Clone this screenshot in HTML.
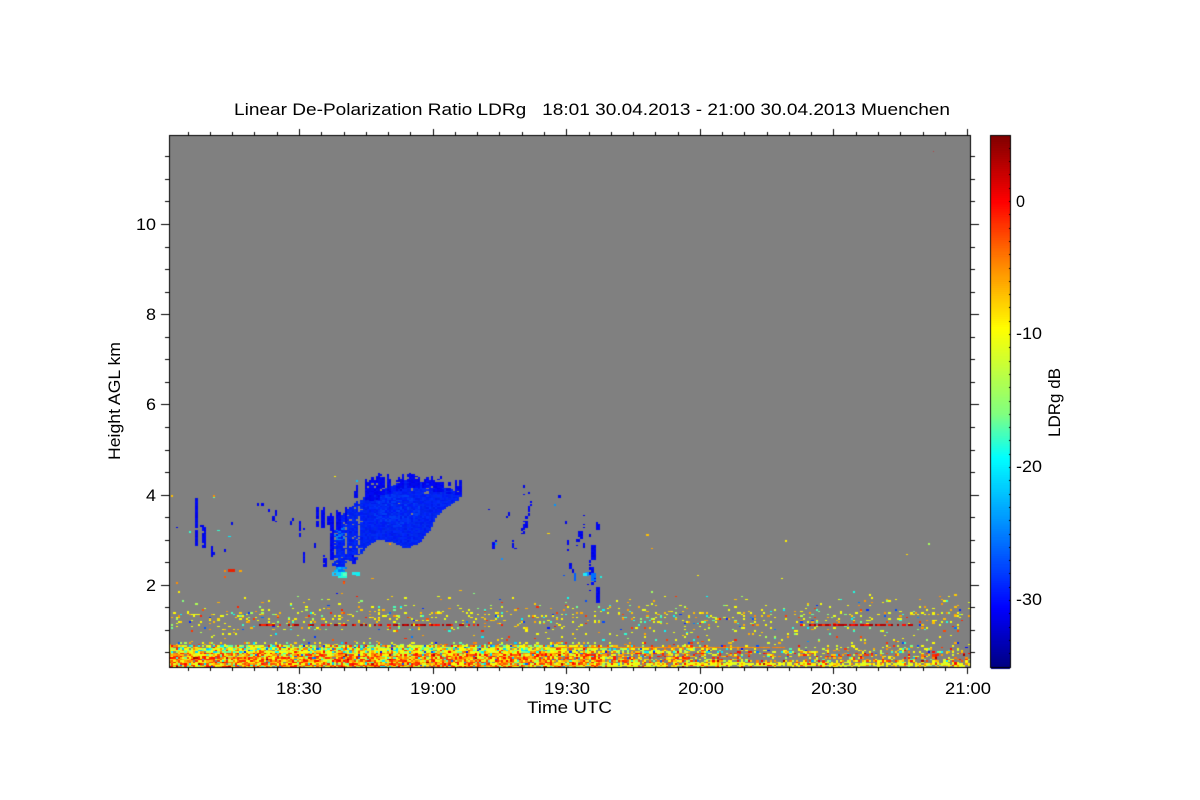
<!DOCTYPE html>
<html>
<head>
<meta charset="utf-8">
<style>
html,body{margin:0;padding:0;background:#fff;width:1200px;height:800px;overflow:hidden}
canvas,svg{position:absolute;left:0;top:0}
text{font-family:"Liberation Sans",Arial,sans-serif;font-size:17px;fill:#000}
</style>
</head>
<body>
<canvas id="c" width="1200" height="800"></canvas>
<svg width="1200" height="800" viewBox="0 0 1200 800">
<text x="234" y="115" textLength="716" lengthAdjust="spacingAndGlyphs" xml:space="preserve">Linear De-Polarization Ratio LDRg   18:01 30.04.2013 - 21:00 30.04.2013 Muenchen</text>
<text x="136" y="230" textLength="20" lengthAdjust="spacingAndGlyphs">10</text>
<text x="146" y="320" textLength="10" lengthAdjust="spacingAndGlyphs">8</text>
<text x="146" y="410" textLength="10" lengthAdjust="spacingAndGlyphs">6</text>
<text x="146" y="501" textLength="10" lengthAdjust="spacingAndGlyphs">4</text>
<text x="146" y="591" textLength="10" lengthAdjust="spacingAndGlyphs">2</text>
<text x="276" y="694" textLength="46" lengthAdjust="spacingAndGlyphs">18:30</text>
<text x="410" y="694" textLength="46" lengthAdjust="spacingAndGlyphs">19:00</text>
<text x="544" y="694" textLength="46" lengthAdjust="spacingAndGlyphs">19:30</text>
<text x="678" y="694" textLength="46" lengthAdjust="spacingAndGlyphs">20:00</text>
<text x="811" y="694" textLength="46" lengthAdjust="spacingAndGlyphs">20:30</text>
<text x="945" y="694" textLength="46" lengthAdjust="spacingAndGlyphs">21:00</text>
<text x="527" y="713" textLength="85" lengthAdjust="spacingAndGlyphs">Time UTC</text>
<text transform="translate(120 460) rotate(-90)" textLength="118" lengthAdjust="spacingAndGlyphs">Height AGL km</text>
<text x="1016" y="207" textLength="9" lengthAdjust="spacingAndGlyphs">0</text>
<text x="1016" y="339" textLength="26" lengthAdjust="spacingAndGlyphs">-10</text>
<text x="1016" y="472" textLength="26" lengthAdjust="spacingAndGlyphs">-20</text>
<text x="1016" y="605" textLength="26" lengthAdjust="spacingAndGlyphs">-30</text>
<text transform="translate(1060 437) rotate(-90)" textLength="69" lengthAdjust="spacingAndGlyphs">LDRg dB</text>
</svg>
<script>
(function(){
var cv=document.getElementById('c'),g=cv.getContext('2d');
var s=1234567;
function R(){s|=0;s=s+0x6D2B79F5|0;var t=Math.imul(s^s>>>15,1|s);t=t+Math.imul(t^t>>>7,61|t)^t;return((t^t>>>14)>>>0)/4294967296;}
var stops=[[135,128,0,0],[201,255,0,0],[260,255,128,0],[328,255,255,0],[413,128,255,128],[457,0,255,255],[607,0,0,255],[667,0,0,128]];
function cy(y){
  for(var i=0;i<stops.length-1;i++){
    var a=stops[i],b=stops[i+1];
    if(y<=b[0]){var t=Math.max(0,(y-a[0])/(b[0]-a[0]));
      return 'rgb('+Math.round(a[1]+(b[1]-a[1])*t)+','+Math.round(a[2]+(b[2]-a[2])*t)+','+Math.round(a[3]+(b[3]-a[3])*t)+')';}
  }
  return 'rgb(0,0,128)';
}
function db(d){return cy(201-13.3*d);}
g.fillStyle='#fff';g.fillRect(0,0,1200,800);
g.fillStyle='#808080';g.fillRect(169,135,802,533);
var CW=2.2,CH=1.5;
function cell(x,y,c){
  var i=Math.floor((x-169)/CW),j=Math.floor((y-135)/CH);
  var x0=Math.round(169+i*CW),x1=Math.round(169+(i+1)*CW),y0=Math.round(135+j*CH),y1=Math.round(135+(j+1)*CH);
  if(x0<170)x0=170;if(x1>970)x1=970;if(y1>667)y1=667;
  g.fillStyle=c;g.fillRect(x0,y0,x1-x0,y1-y0);
}
function noiseCol(y){
  var r=R();
  var low=y>652; // lower part: more orange/red, upper part: more yellow/cyan
  if(low){
    if(r<0.24)return db(-9-R()*2.5);
    if(r<0.56)return db(-4-R()*4);
    if(r<0.86)return db(-R()*3);
    if(r<0.92)return db(-12-R()*3);
    if(r<0.96)return db(-16-R()*3);
    if(r<0.985)return db(-20-R()*8);
    return db(2+R()*2);
  }
  if(r<0.42)return db(-9-R()*2.5);
  if(r<0.62)return db(-4-R()*4);
  if(r<0.72)return db(-R()*3);
  if(r<0.82)return db(-12-R()*2.5);
  if(r<0.90)return db(-15-R()*3);
  if(r<0.97)return db(-19-R()*3);
  return db(-25-R()*6);
}
function spCol(){
  var r=R();
  if(r<0.42)return db(-9-R()*2);
  if(r<0.68)return db(-5-R()*3);
  if(r<0.78)return db(-13-R()*3);
  if(r<0.88)return db(-16-R()*4);
  if(r<0.95)return db(-1-R()*2);
  return db(-24-R()*6);
}
// near-ground band
for(var x=170;x<970;x+=CW){
  var a=x<540?0:(x<760?(x-540)/220:1);
  for(var y=642;y<667;y+=CH){
    var d;
    if(y<645) d=0.26*(1-a)+0.03*a;
    else if(y<647) d=0.85*(1-a)+0.10*a;
    else if(y<660) d=0.97*(1-a)+0.28*a;
    else if(y<663) d=0.98*(1-a)+0.55*a;
    else if(y<666) d=0.98*(1-a)+0.85*a;
    else d=0.9*(1-a)+0.3*a;
    if(R()<d){
      var c=noiseCol(y);
      if(a>0.3&&y>=661&&R()<0.6)c=db(-8.5-R()*3.5);
      cell(x,y+0.01,c);
    }
  }
  // orange line
  if(x>555&&x<785&&R()<0.9)cell(x,646.5,db(-4-R()*2));
}
// speckle
for(x=170;x<970;x+=CW){
  for(y=590;y<644;y+=CH){
    d=0.006;
    if(y>=604&&y<612)d=0.07;
    else if(y>=612&&y<622)d=0.14;
    else if(y>=622&&y<630)d=0.09;
    else if(y>=630&&y<642)d=0.03;
    else if(y>=596&&y<604)d=0.02;
    if(x>540&&y>=630)d=Math.max(d,0.05);
    if(x>780&&y<612&&y>=598)d=0.07;
    if(R()<d)cell(x,y,spCol());
  }
}
// red lines
for(x=250;x<480;x+=CW){if(R()<0.62)cell(x,624,R()<0.6?db(2+R()*2):db(-R()*2));}
for(x=800;x<916;x+=CW){if(R()<0.75)cell(x,624,R()<0.6?db(2+R()*2):db(-R()*2));}
// Blue helpers
function blue(){return 'rgb(0,'+Math.round(24+R()*22)+','+Math.round(232+R()*20)+')';}
function dblue(){return 'rgb(0,'+Math.round(R()*14)+','+Math.round(222+R()*30)+')';}
function seg(x0,y0,x1,y1,w,p){
  p=p||0.95;
  for(var yy=y0;yy<=y1;yy+=CH){
    var t=y1==y0?0:(yy-y0)/(y1-y0),xc=x0+(x1-x0)*t;
    for(var xx=xc-w/2;xx<=xc+w/2;xx+=CW){if(R()<p)cell(xx,yy,dblue());}
  }
}
// main cloud polygon, (coords relative to zoom crop)
var P=[[40,210],[60,170],[90,142],[130,112],[180,92],[260,60],[330,72],[400,90],[425,100],[420,120],[380,142],[350,172],[330,212],[300,250],[260,266],[215,245],[170,240],[140,260],[110,300],[95,305],[85,298],[78,332],[70,352],[45,342],[35,300]];
function inP(px,py){var ins=false;for(var i=0,j=P.length-1;i<P.length;j=i++){var a=P[i],b=P[j];if((a[1]>py)!=(b[1]>py)&&px<(b[0]-a[0])*(py-a[1])/(b[1]-a[1])+a[0])ins=!ins;}return ins;}
for(x=320;x<470;x+=CW){
  var colGap=R();
  for(y=460;y<585;y+=CH){
    var zx=(x-320)*3,zy=(y-460)*3;
    if(inP(zx,zy)){
      var inner=zx>130&&zy>100;
      if(R()<(inner?0.998:(zx<130?(colGap<0.25?0.35:0.92):0.95))){
        var col=blue();
        var dd=Math.hypot((zx-230)/70,(zy-150)/50);
        if(dd<1&&R()<0.4)col='rgb(0,'+Math.round(45+R()*22)+',245)';
        if(zx<75&&zy>200&&zy<240&&R()<0.5)col='rgb(0,'+Math.round(90+R()*70)+',245)';
        if(zx<80&&zy>320)col='rgb(0,'+Math.round(110+R()*90)+',250)';
        cell(x,y,col);
      }
    }
  }
}
// teeth on the top of the cloud
var T=[[135,175,45,120],[180,195,30,105],[205,215,32,100],[230,255,42,90],[265,280,32,80],[285,300,38,80],[310,340,45,85],[345,375,45,95],[385,395,65,100],[410,425,62,105],[105,118,75,115],[75,88,140,190],[50,60,138,205],[5,15,135,205],[34,44,160,300],[15,24,285,320],[100,112,280,310]];
T.forEach(function(t){
  for(var xx=t[0];xx<t[1];xx+=CW*3){
    var top=t[2]+R()*24;
    for(var yy=top;yy<t[3];yy+=CH*3){
      if(R()<0.9)cell(320+xx/3,460+yy/3,dblue());
    }
  }
});
// cyan foot
function patch(x0,y0,x1,y1,c,p){for(var xx=x0;xx<x1;xx+=CW)for(var yy=y0;yy<y1;yy+=CH)if(R()<(p||1))cell(xx,yy,c);}
patch(340,572,347,578,'#20ffd8');
patch(344,574,347,577,'#60ffc0');
patch(333,572,340,576,'#18c8ff',0.7);
patch(352,572,360,574,'#20e8f0',0.8);
patch(357,572,360,576,'#10f0f0');
patch(331,576,335,580,'#20e0e0',0.6);
cell(344,583,db(-3));
cell(344,581,db(-2));
cell(338,593,db(-30));
// left streaks
seg(198.5,498,198.5,527,2);
seg(204,525,205,547,4,0.9);
seg(196.5,530,196.5,546,2);
seg(212.5,547,213,557,2);
seg(178,525,180,535,2,0.7);
seg(233,523,233,525,1);
seg(258,503,258,505,1);seg(264,503,264,505,1);seg(270,509,270,511,1);
seg(276.5,510,275,518,2,0.8);seg(273,518,273,520,1);seg(277,521,277,523,1);
seg(293,518,292,525,1);
seg(300,521,300,536,1.5,0.85);
seg(305,529,305,530,1);
seg(305,552,305,561,1);
seg(318,507,318,526,1);
seg(323,514,323,528,3,0.85);
seg(329,516,329,524,2);
seg(316,544,316,548,1);
seg(301,528,303,528,2);
seg(226,550,226,552,1);seg(214,553,214,555,1);
// right streaks (zoom 8 coordinates)
function Z(x0,y0,x1,y1,w,p){seg(480+x0/3,470+y0/3,480+x1/3,470+y1/3,w,p);}
Z(133,45,133,52,2);Z(132,70,132,78,1);Z(148,67,148,69,1);Z(243,76,243,82,1);
Z(154,97,150,128,2);Z(147,132,144,148,2);Z(137,154,132,190,3);
Z(88,126,84,142,1);Z(30,115,30,120,1);
Z(47,212,43,235,2);Z(105,212,105,230,2);Z(107,236,107,238,1);
Z(317,134,317,136,2);Z(260,152,258,158,1);Z(357,160,355,180,3);Z(313,163,313,165,1);Z(310,171,310,173,1);Z(336,193,336,200,2);
Z(305,186,299,216,4);Z(270,214,270,224,2);Z(312,220,312,230,2);Z(293,220,293,226,1);Z(265,238,265,240,1);
Z(342,226,343,270,3);Z(332,270,332,285,1);Z(337,292,345,345,4);Z(275,280,280,310,2);
Z(352,352,358,400,3);Z(328,342,330,345,1);Z(334,360,334,362,1);
patch(480+282/3,470+310/3,480+288/3,470+332/3,'#0060ff');
patch(480+320/3,470+308/3,480+330/3,470+320/3,'#1090ff',0.9);
patch(480+308/3,470+310/3,480+316/3,470+318/3,'#20e8f8');
patch(480+335/3,470+310/3,480+346/3,470+330/3,'#0070ff',0.9);
cell(480+253/3,470+314/3,'#0050ff');cell(480+362/3,470+318/3,'#20f0e0');cell(480+67/3,470+265/3,'#1090ff');
// red dash and scattered points
patch(229,569,235,571,'#e82000');
cell(226,570,db(-5));cell(241,570,db(-6));cell(226,576,db(-3));
cell(176,583,db(-5));cell(176,582,db(-5));
[[173,495,-7],[213,497,-17],[213,496,-5],[190,531,-18],[229,536,-20],[218,530,-18],[335,476,-9],[358,480,-22],[391,544,-5],[548,533,-8],[647,535,-7],[651,548,-6],[699,575,-9],[786,541,-9],[781,578,-10],[908,554,-8],[928,544,-14],[372,578,-6],[556,505,-24],[495,544,-24]].forEach(function(p){cell(p[0],p[1],db(p[2]));});
g.fillStyle='#b04848';g.fillRect(933,151,1,1);
// frame and ticks
g.fillStyle='#000';
function L(x,y,w,h){g.fillRect(x,y,w,h);}
L(169,135,802,1);L(169,667,802,1);L(169,135,1,533);L(970,135,1,533);
var k,v;
for(k=-9;k<=47;k++){
  v=224+k*22.55;
  if(v<137||v>666)continue;
  var m=(k%4==0);
  v=Math.round(v);
  if(m){L(161,v,8,1);L(971,v,8,1);}else{L(165,v,4,1);L(971,v,4,1);}
}
for(k=-30;k<=30;k++){
  v=299+k*22.27;
  if(v<171||v>970)continue;
  m=(k%6==0);
  v=Math.round(v);
  if(m){L(v,129,1,6);L(v,668,1,6);}else{L(v,132,1,3);L(v,668,1,3);}
}
// colourbar
for(y=136;y<667;y+=2.08){
  g.fillStyle=cy(y);
  g.fillRect(991,Math.round(y),19,3);
}
g.fillStyle='#000';
L(990,135,1,533);L(1010,135,1,533);L(990,135,21,1);L(990,667,21,1);
for(k=-35;k<=5;k++){v=Math.round(201-13.3*k);if(v>136&&v<666)L(1009,v,1,1);}
})();
</script>
</body>
</html>
